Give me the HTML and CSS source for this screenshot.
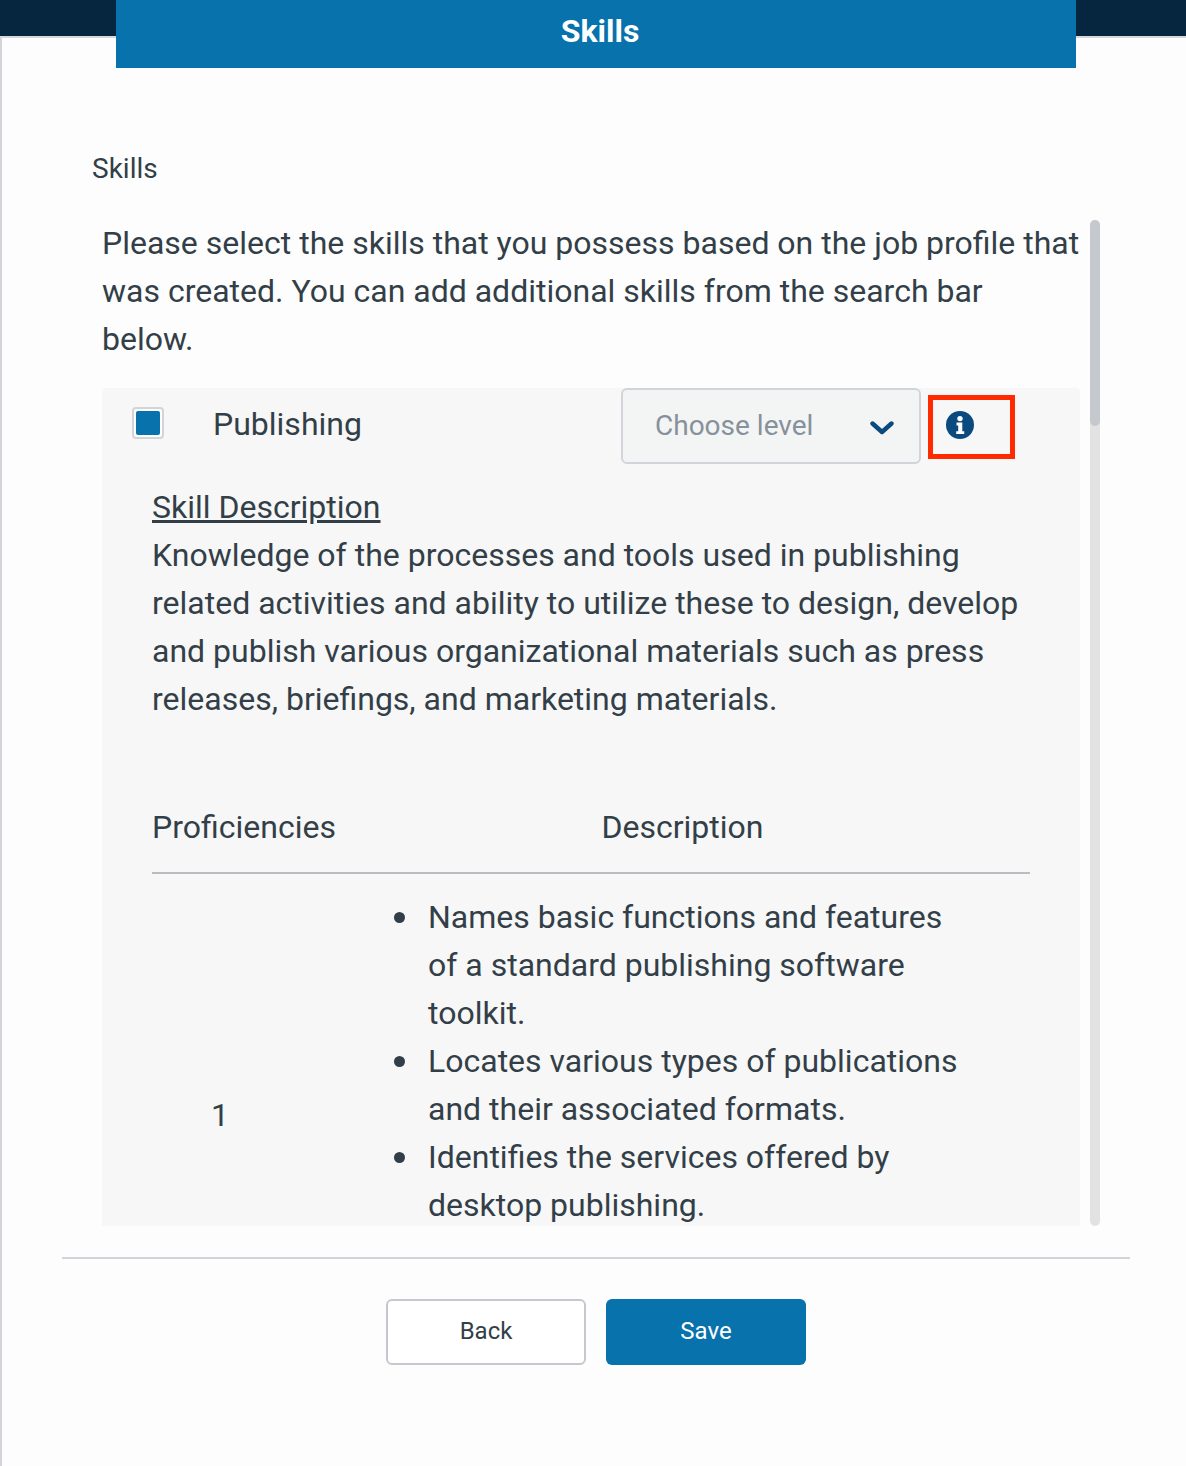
FILE: index.html
```html
<!DOCTYPE html>
<html lang="en">
<head>
<meta charset="utf-8">
<title>Skills</title>
<link rel="stylesheet" href="styles.css">
</head>
<body>
<div class="backdrop"></div>
<main class="modal">
  <h1 class="modal-title">Skills</h1>
  <div class="section-label">Skills</div>
  <div class="scroll-wrap">
    <div class="scroll-area">
      <p class="intro">Please select the skills that you possess based on the job profile that was created. You can add additional skills from the search bar below.</p>
      <section class="skill">
        <div class="skill-head">
          <span class="checkbox"><span class="checkbox-fill"></span></span>
          <span class="skill-name">Publishing</span>
          <div class="select">
            <span class="select-text">Choose level</span>
            <svg class="chevron" width="24" height="14" viewBox="0 0 24 14"><path d="M2.5 2.5 L12 11 L21.5 2.5" fill="none" stroke="#0a4a7f" stroke-width="4.4" stroke-linecap="round" stroke-linejoin="round"/></svg>
          </div>
          <div class="info-box">
            <svg width="28" height="28" viewBox="0 0 28 28"><circle cx="14" cy="14" r="14" fill="#0a4a7f"/><circle cx="14" cy="7.6" r="2.7" fill="#fff"/><path d="M10.5 11.6h5.8v8.6h1.9v2.8h-8v-2.8h2v-5.8h-1.7z" fill="#fff"/></svg>
          </div>
        </div>
        <div class="skill-body">
          <h2 class="desc-title">Skill Description</h2>
          <p class="desc-text">Knowledge of the processes and tools used in publishing related activities and ability to utilize these to design, develop and publish various organizational materials such as press releases, briefings, and marketing materials.</p>
          <div class="table-head">
            <span class="col-prof">Proficiencies</span>
            <span class="col-desc">Description</span>
          </div>
          <div class="table-row">
            <span class="level">1</span>
            <ul class="level-list">
              <li>Names basic functions and features of a standard publishing software toolkit.</li>
              <li>Locates various types of publications and their associated formats.</li>
              <li>Identifies the services offered by desktop publishing.</li>
            </ul>
          </div>
        </div>
      </section>
    </div>
    <div class="scrollbar"><div class="scrollbar-thumb"></div></div>
  </div>
  <div class="footer">
    <button class="btn btn-back" type="button">Back</button>
    <button class="btn btn-save" type="button">Save</button>
  </div>
</main>
</body>
</html>
```

FILE: styles.css
```css
* { box-sizing: border-box; }
html, body { margin: 0; padding: 0; }
body {
  width: 1186px;
  height: 1466px;
  overflow: hidden;
  background: #fdfdfd;
  font-family: Roboto, "Liberation Sans", sans-serif;
  color: #333f48;
}
.backdrop {
  height: 38px;
  background: #06263f;
  border-bottom: 2px solid #d5d8dc;
}
.modal {
  display: flow-root;
  height: 1428px;
  border-left: 2px solid #d1d5da;
  background: #fdfdfd;
}
.modal-title {
  position: relative;
  margin: -38px 0 0 114px;
  width: 960px;
  height: 68px;
  padding-left: 8px;
  background: #0872ac;
  color: #fff;
  font-size: 32px;
  font-weight: 700;
  line-height: 62px;
  text-align: center;
}
.section-label {
  margin: 85px 0 0 90px;
  font-size: 28px;
  line-height: 32px;
}
.scroll-wrap {
  display: flex;
  margin: 35px 0 0 100px;
  height: 1006px;
}
.scroll-area {
  width: 978px;
  height: 1006px;
  overflow: hidden;
}
.intro {
  margin: -1px 0 25px;
  font-size: 32px;
  line-height: 48px;
  height: 144px;
}
.skill {
  background: #f7f7f7;
  border-radius: 4px 4px 0 0;
}
.skill-head {
  display: flex;
  align-items: flex-start;
  height: 76px;
}
.checkbox {
  width: 32px;
  height: 32px;
  margin: 19px 0 0 30px;
  border: 2px solid #d1d5da;
  border-radius: 4px;
  padding: 2px;
  background: #fff;
  flex: none;
}
.checkbox-fill {
  display: block;
  width: 24px;
  height: 24px;
  background: #0872ac;
  border-radius: 2px;
}
.skill-name {
  margin: 12px 0 0 49px;
  width: 408px;
  font-size: 32px;
  line-height: 48px;
}
.select {
  display: flex;
  align-items: center;
  justify-content: space-between;
  width: 300px;
  height: 76px;
  padding: 0 25px 0 32px;
  background: #f3f5f5;
  border: 2px solid #d1d5da;
  border-radius: 6px;
  flex: none;
}
.select-text {
  margin-bottom: 2px;
  font-size: 28px;
  color: #87919a;
}
.chevron { flex: none; margin-top: 4px; }
.info-box {
  display: flex;
  align-items: flex-start;
  width: 87px;
  height: 64px;
  margin: 7px 0 0 7px;
  padding: 11px 0 0 13px;
  border: 5px solid #ff2a00;
  flex: none;
}
.skill-body {
  padding: 19px 50px 0;
}
.desc-title {
  margin: 0;
  font-size: 32px;
  font-weight: 400;
  line-height: 48px;
  text-decoration: underline;
}
.desc-text {
  margin: 0;
  font-size: 32px;
  line-height: 48px;
}
.table-head {
  display: flex;
  height: 71px;
  margin-top: 80px;
  border-bottom: 2px solid #b9bdc1;
  font-size: 32px;
  line-height: 48px;
}
.col-prof { width: 449.5px; }
.table-row {
  display: flex;
  align-items: center;
  padding-top: 19px;
  font-size: 32px;
  line-height: 48px;
}
.level {
  width: 226px;
  padding-left: 59px;
  flex: none;
}
.level-list {
  margin: 0;
  padding: 0 0 108px 50px;
  width: 590px;
  list-style: none;
}
.level-list li {
  display: flex;
  flex-wrap: nowrap;
}
.level-list li::before {
  content: "";
  flex: none;
  width: 11px;
  height: 11px;
  margin: 19px 23px 0 -34px;
  border-radius: 50%;
  background: #333f48;
}
.scrollbar {
  width: 10px;
  height: 1006px;
  margin-left: 10px;
  background: #e2e2e2;
  border-radius: 5px;
  flex: none;
}
.scrollbar-thumb {
  height: 206px;
  background: #c5c9ce;
  border-radius: 5px;
}
.footer {
  display: flex;
  justify-content: center;
  gap: 20px;
  margin: 31px 56px 0 60px;
  padding-top: 40px;
  border-top: 2px solid #d1d5da;
}
.btn {
  width: 200px;
  height: 66px;
  padding: 0 0 2px;
  font-family: inherit;
  font-size: 24px;
  border-radius: 6px;
}
.btn-back {
  background: #fff;
  border: 2px solid #c5c9ce;
  color: #333f48;
}
.btn-save {
  background: #0872ac;
  border: none;
  color: #fff;
}
```
